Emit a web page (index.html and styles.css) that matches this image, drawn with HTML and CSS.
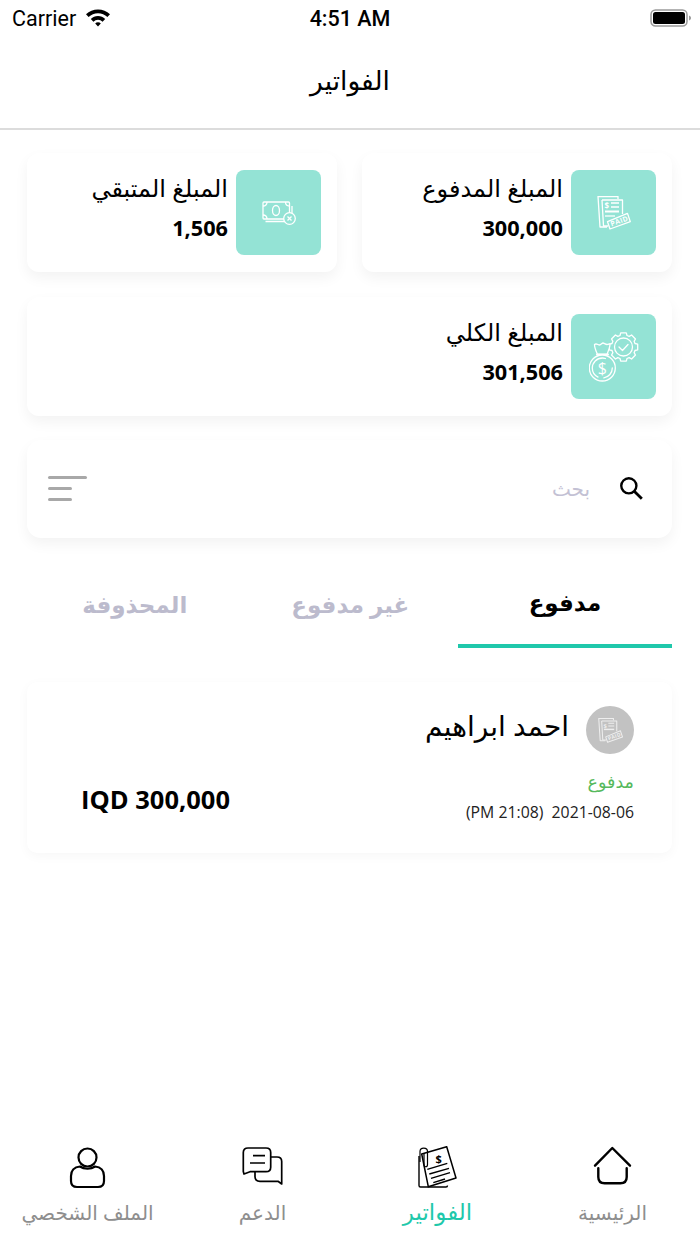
FILE: index.html
```html
<!DOCTYPE html>
<html lang="ar">
<head>
<meta charset="utf-8">
<title>الفواتير</title>
<link rel="stylesheet" href="styles.css">
</head>
<body>
<div class="app">
  <div class="status" dir="ltr">
    <div class="status-left">
      <span>Carrier</span>
      <svg class="wifi" viewBox="0 0 26 20" width="26" height="20"><path d="M13 2.500c4.600 0 8.800 1.800 12 4.800l-2.600 2.800A13.700 13.700 0 0 0 13 6.300a13.700 13.700 0 0 0-9.400 3.800L1 7.300c3.200-3 7.400-4.800 12-4.800z" fill="#000"/><path d="M13 9c2.800 0 5.300 1.100 7.200 2.900l-2.600 2.800A6.700 6.700 0 0 0 13 12.800a6.700 6.700 0 0 0-4.600 1.900l-2.600-2.800C7.700 10.100 10.200 9 13 9z" fill="#000"/><path d="M13 15.300c1.100 0 2.100.4 2.800 1.100L13 19.400l-2.800-3c.7-.7 1.700-1.100 2.800-1.100z" fill="#000"/></svg>
    </div>
    <div class="status-time">4:51 AM</div>
    <div class="status-right">
      <svg viewBox="0 0 42 20" width="42" height="20"><rect x="1" y="2" width="36" height="16" rx="4.500" fill="none" stroke="#9a9a9a" stroke-width="1.500"/><rect x="3" y="4" width="32" height="12" rx="2.500" fill="#000"/><path d="M39 7.500c1.300.4 2 1.300 2 2.500s-.7 2.100-2 2.500z" fill="#9a9a9a"/></svg>
    </div>
  </div>
  <header class="nav">الفواتير</header>

  <main class="content">
    <section class="summary">
      <div class="stat">
        <div class="tile">
          <svg viewBox="0 0 34 34" width="34" height="34"><g fill="none" stroke="#fff" stroke-width="1.300" stroke-linejoin="round"><path d="M21 3V.5H1L3 31h7"/><path d="M5 4h20.500v14"/><path d="M5 4l1.500 26H11"/><path d="M14 7h8M14 11h8"/><path d="M8 15.500h14" stroke-width="2"/><path d="M8 20h10"/><path d="M10.500 25.700l20-8.300 2.800 8.300-20.300 7.300z" fill="#94e3d5"/></g><text x="7.500" y="13" class="paper-dollar">$</text><text x="14.500" y="30.500" transform="rotate(-20 14.500 30.500)" class="paper-paid">PAID</text></svg>
        </div>
        <div class="stat-text">
          <div class="stat-label">المبلغ المدفوع</div>
          <div class="stat-value">300,000</div>
        </div>
      </div>
      <div class="stat">
        <div class="tile">
          <svg viewBox="0 0 34 24" width="34" height="24"><g fill="none" stroke="#fff" stroke-width="1.300"><rect x="1" y="1" width="26.500" height="17" rx="1"/><path d="M3.500 20.500H30V5"/><ellipse cx="14" cy="9.500" rx="3.500" ry="5"/><path d="M1 5c2.500 0 4-1.500 4-4M27.500 5c-2.500 0-4-1.500-4-4M1 14c2.500 0 4 1.500 4 4M27.500 14c-2.500 0-4 1.500-4 4"/></g><circle cx="27.500" cy="17.500" r="5.800" fill="#94e3d5" stroke="#fff" stroke-width="1.300"/><path d="M25.500 15.500l4 4M29.500 15.500l-4 4" stroke="#fff" stroke-width="1.300"/></svg>
        </div>
        <div class="stat-text">
          <div class="stat-label">المبلغ المتبقي</div>
          <div class="stat-value">1,506</div>
        </div>
      </div>
      <div class="stat stat-wide">
        <div class="tile">
          <svg viewBox="0 0 50 50" width="50" height="50"><g fill="none" stroke="#fff" stroke-width="1.300" stroke-linejoin="round" stroke-linecap="round"><polygon transform="translate(34.500 15)" points="11.500,-3.500 14.200,-2.800 14.200,2.800 11.500,3.500 10.600,5.700 12,8.060 8.060,12 5.700,10.600 3.500,11.500 2.800,14.200 -2.800,14.200 -3.500,11.500 -5.700,10.600 -8.060,12 -12,8.060 -10.600,5.700 -11.500,3.500 -14.200,2.800 -14.200,-2.800 -11.500,-3.500 -10.600,-5.700 -12,-8.060 -8.060,-12 -5.700,-10.600 -3.500,-11.500 -2.800,-14.200 2.800,-14.200 3.500,-11.500 5.700,-10.600 8.060,-12 12,-8.060 10.600,-5.700"/><circle cx="34.500" cy="15" r="9"/><path d="M30 15l3.500 3.500 5.500-6"/><path d="M8.500 22.500C7 19 5.500 16 5.500 12.500c2-1.500 3.500.5 5 .5s2.500-2 3.500-2 2.500 1.500 4 1.500 2.500-1 3-.5c.3 3-2 7-3 10.500z" fill="#94e3d5"/><path d="M8 22.500h11" stroke-width="2"/><circle cx="13.300" cy="36" r="13" fill="#94e3d5"/><circle cx="13.300" cy="36" r="10" stroke-dasharray="14 6 30 13"/></g><text x="13.300" y="42" class="bag-dollar">$</text></svg>
        </div>
        <div class="stat-text">
          <div class="stat-label">المبلغ الكلي</div>
          <div class="stat-value">301,506</div>
        </div>
      </div>
    </section>

    <section class="search">
      <svg viewBox="0 0 24 24" width="26" height="26"><circle cx="10" cy="10" r="7" fill="none" stroke="#000" stroke-width="2.200"/><path d="M15 15l7 7" stroke="#000" stroke-width="2.600"/></svg>
      <span class="search-hint">بحث</span>
      <div class="filter"><i class="filter-long"></i><i class="filter-short"></i><i class="filter-short"></i></div>
    </section>

    <nav class="tabs">
      <div class="tab tab-active">مدفوع</div>
      <div class="tab">غير مدفوع</div>
      <div class="tab">المحذوفة</div>
    </nav>

    <article class="invoice">
      <div class="invoice-head">
        <div class="avatar">
          <svg viewBox="0 0 34 34" width="25" height="25"><g fill="none" stroke="#eee" stroke-width="1.400" stroke-linejoin="round"><path d="M21 3V.5H1L3 31h7"/><path d="M5 4h20.500v14"/><path d="M5 4l1.500 26H11"/><path d="M14 7h8M14 11h8"/><path d="M8 15.500h14" stroke-width="2"/><path d="M10.500 25.700l20-8.300 2.800 8.300-20.300 7.300z" fill="#c2c2c2"/></g><text x="7.500" y="13" class="avatar-dollar">$</text><text x="14.500" y="30.500" transform="rotate(-20 14.500 30.500)" class="avatar-paid">PAID</text></svg>
        </div>
        <div class="invoice-name">احمد ابراهيم</div>
      </div>
      <div class="invoice-foot">
        <div class="invoice-meta">
          <div class="invoice-status">مدفوع</div>
          <div class="invoice-date" dir="ltr">(PM 21:08)&nbsp; 2021-08-06</div>
        </div>
        <div class="invoice-amount" dir="ltr">IQD 300,000</div>
      </div>
    </article>
  </main>

  <footer class="tabbar">
    <div class="bar-item">
      <div class="bar-icon"><svg viewBox="0 0 41 41" width="41" height="41"><path d="M3 19.700L20.300 2 38 19.700" fill="none" stroke="#000" stroke-width="2.400" stroke-linecap="round" stroke-linejoin="round"/><path d="M6.300 22.300V31c0 4 2.500 6.300 6.300 6.300h15.800c3.800 0 6.300-2.300 6.300-6.300v-8.700" fill="none" stroke="#000" stroke-width="2.400" stroke-linecap="round"/></svg></div>
      <span class="bar-label">الرئيسية</span>
    </div>
    <div class="bar-item bar-active">
      <div class="bar-icon"><svg viewBox="0 0 41 43" width="41" height="43"><path d="M2 10v29.500c0 1 .6 1.500 1.500 1.500H29c1 0 1.500-.5 1.500-1.500" fill="none" stroke="#000" stroke-width="1.400"/><path d="M4.700 8L29.700.7 39 32l-27.700 8.700z" fill="#fff" stroke="#000" stroke-width="1.500" stroke-linejoin="round"/><path d="M10.300 23.300l20-6M12.300 28L32 22.300M14 32.300l19-5.600M16.300 36.700L28 33" stroke="#000" stroke-width="1.400"/><path d="M3 16V5.500c0-4.500 7.500-4.500 7.500 0v13c0 3-3.500 3-3.500 0V7" fill="none" stroke="#000" stroke-width="1.200"/><text x="18.500" y="17" class="doc-dollar">$</text></svg></div>
      <span class="bar-label">الفواتير</span>
    </div>
    <div class="bar-item">
      <div class="bar-icon"><svg viewBox="0 0 41 40" width="41" height="40"><path d="M6 2h18c3 0 4.700 1.700 4.700 4.500v14.700c0 2.800-1.700 4.500-4.700 4.500H8L2 28l-.7-2.500V6.500C1.300 3.700 3 2 6 2z" fill="none" stroke="#000" stroke-width="1.700" stroke-linejoin="round"/><path d="M28.700 11H35c3 0 4.700 1.700 4.700 4.500V38L36 35.300H18c-3 0-5-1.700-5-4.500v-5" fill="none" stroke="#000" stroke-width="1.700" stroke-linejoin="round"/><path d="M11 9.700h12M8 17h15" stroke="#000" stroke-width="1.700"/></svg></div>
      <span class="bar-label">الدعم</span>
    </div>
    <div class="bar-item">
      <div class="bar-icon"><svg viewBox="0 0 38 44" width="38" height="44"><circle cx="18.500" cy="11.500" r="9" fill="none" stroke="#000" stroke-width="2.200"/><path d="M11 20.500C5 21 2 25 2 30v5c0 4 2 6 6 6h21c4 0 6-2 6-6v-5c0-5-3-9-9-9.500-4 3-11 3-15 0z" fill="none" stroke="#000" stroke-width="2.200" stroke-linejoin="round"/></svg></div>
      <span class="bar-label">الملف الشخصي</span>
    </div>
  </footer>
</div>
</body>
</html>
```

FILE: styles.css
```css
* { box-sizing: border-box; }
html, body { margin: 0; padding: 0; background: #fff; }
body { font-family: "Open Sans", "DejaVu Sans", sans-serif; color: #000; }
svg { direction: ltr; display: block; }
.app { width: 700px; height: 1244px; display: flex; flex-direction: column; direction: rtl; overflow: hidden; }

.status { height: 36px; display: grid; grid-template-columns: 1fr auto 1fr; align-items: center; padding: 0 8px; font-family: Roboto, sans-serif; }
.status-left { display: flex; align-items: center; gap: 9px; font-size: 21.500px; padding-left: 4px; }
.status-time { font-size: 21.500px; font-weight: 500; }
.status-right { display: flex; justify-content: flex-end; }
.wifi { margin-top: -3px; }

.nav { height: 94px; padding-bottom: 4px; display: flex; align-items: center; justify-content: center; font-size: 26.500px; border-bottom: 2px solid #dcdcdc; }

.content { flex: 1; padding: 23px 28px 0 27px; display: flex; flex-direction: column; }
.summary { display: grid; grid-template-columns: 1fr 1fr; gap: 25px; }
.stat { height: 119px; background: #fff; border-radius: 12px; box-shadow: 0 6px 14px rgba(0,0,0,.05); display: flex; align-items: center; padding: 0 16px; gap: 8px; }
.stat-wide { grid-column: 1 / -1; }
.tile { width: 85px; height: 85px; flex: none; border-radius: 8px; background: #94e3d5; display: flex; align-items: center; justify-content: center; }
.paper-dollar { font-size: 8px; fill: #fff; font-weight: 700; }
.paper-paid { font-size: 7px; fill: #fff; font-weight: 700; letter-spacing: .4px; }
.avatar-dollar { font-size: 8px; fill: #eee; font-weight: 700; }
.avatar-paid { font-size: 7px; fill: #eee; font-weight: 700; letter-spacing: .4px; }
.bag-dollar { font-size: 16px; fill: #fff; text-anchor: middle; }
.stat-text { display: flex; flex-direction: column; gap: 10px; padding-bottom: 10px; }
.stat-label { font-size: 24px; line-height: 30px; }
.stat-value { font-size: 21.700px; line-height: 30px; font-weight: 700; }

.search { height: 98px; margin-top: 24px; background: #fff; border-radius: 14px; box-shadow: 0 6px 14px rgba(0,0,0,.05); display: flex; align-items: center; padding: 0 28px 2px 21px; }
.search-hint { margin-right: 28px; font-size: 20px; color: #c3c1d4; flex: 1; }
.filter { width: 39px; display: flex; flex-direction: column; gap: 8px; direction: ltr; align-items: flex-start; }
.filter i { display: block; height: 3px; background: #a8a8a8; border-radius: 2px; }
.filter-long { width: 39px; }
.filter-short { width: 24px; }

.tabs { margin-top: 22px; display: grid; grid-template-columns: 214px 1fr 1fr; height: 88px; }
.tab { display: flex; align-items: center; justify-content: center; font-size: 23px; font-weight: 700; color: #bcbbcd; }
.tab-active { color: #000; border-bottom: 4px solid #1fc8ab; }

.invoice { margin-top: 34px; height: 171px; background: #fff; border-radius: 10px; box-shadow: 0 3px 12px rgba(0,0,0,.035); padding: 24px 38px 0 54px; display: flex; flex-direction: column; }
.invoice-head { display: flex; align-items: center; gap: 17px; }
.avatar { width: 48px; height: 48px; border-radius: 50%; background: #c2c2c2; display: flex; align-items: center; justify-content: center; }
.invoice-name { font-size: 28px; padding-bottom: 10px; }
.invoice-foot { display: flex; justify-content: space-between; align-items: center; margin-top: 16px; }
.invoice-meta { display: flex; flex-direction: column; gap: 9px; }
.invoice-status { font-size: 17.500px; color: #55b95c; line-height: 22px; }
.invoice-date { font-size: 15.800px; line-height: 22px; color: #222; }
.invoice-amount { font-size: 25.500px; font-weight: 700; padding-top: 4px; }

.tabbar { height: 114px; display: grid; grid-template-columns: repeat(4, 175px); }
.bar-item { display: flex; flex-direction: column; align-items: center; gap: 10px; padding-top: 16px; }
.bar-icon { height: 42px; display: flex; align-items: flex-start; justify-content: center; }
.bar-label { font-size: 20px; color: #8e8e8e; line-height: 30px; }
.bar-active { gap: 8px; }
.bar-active .bar-label { color: #1fc8ab; font-size: 23px; }
.doc-dollar { font-size: 11px; font-weight: 700; }
```
